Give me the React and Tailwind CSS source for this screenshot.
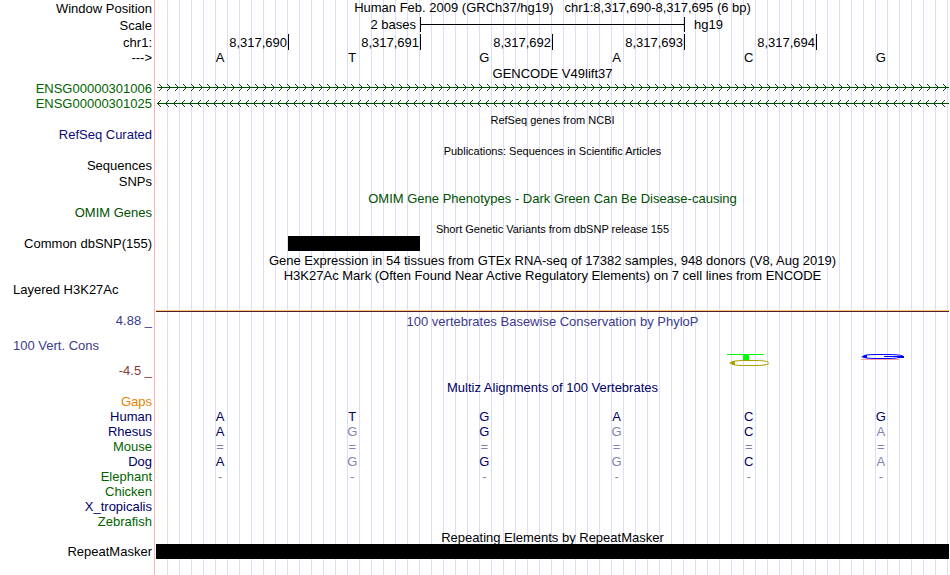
import React from "react";

const BASES = ["A", "T", "G", "A", "C", "G"];
const POSITIONS = ["8,317,690", "8,317,691", "8,317,692", "8,317,693", "8,317,694"];

// lower case = mismatch with the human base, drawn faded
const ALIGNMENTS = [
    { name: "Human", color: "text-[#000064]", bases: "ATGACG" },
    { name: "Rhesus", color: "text-[#000064]", bases: "AgGgCa" },
    { name: "Mouse", color: "text-[#006400]", bases: "======" },
    { name: "Dog", color: "text-[#000064]", bases: "AgGgCa" },
    { name: "Elephant", color: "text-[#006400]", bases: "------" },
    { name: "Chicken", color: "text-[#006400]", bases: "" },
    { name: "X_tropicalis", color: "text-[#000064]", bases: "" },
    { name: "Zebrafish", color: "text-[#006400]", bases: "" },
];

const Row = ({ label, labelClass = "", height = "h-[15px]", children }) => (
    <div className={`flex ${height}`}>
        <div
            className={`flex w-[155px] shrink-0 items-center justify-end border-r border-[#ffb4b4] pr-0.5 ${labelClass}`}>
            {label}
        </div>
        <div className="ml-px min-w-0 flex-1 bg-[repeating-linear-gradient(to_right,transparent_0px,transparent_11px,#dcdcff_11px,#dcdcff_12px)]">
            {children}
        </div>
    </div>
);

const Title = ({ className = "pt-0.5", children }) => (
    <h2 className={`flex h-full items-center justify-center ${className}`}>{children}</h2>
);

const BaseRow = ({ bases, className = "", faded = "" }) => (
    <div className={`grid h-full grid-cols-6 ${className}`}>
        {[...bases].map((base, i) => (
            <span
                key={i}
                className={`flex items-center justify-center pr-1 ${
                    /[a-z=-]/.test(base) ? faded : ""
                }`}>
                {base.toUpperCase()}
            </span>
        ))}
    </div>
);

const Intron = ({ id, direction }) => (
    <svg className="block h-[15px] w-full" shapeRendering="crispEdges">
        <defs>
            <pattern id={id} width="8" height="15" patternUnits="userSpaceOnUse">
                <path
                    d={
                        direction === "right"
                            ? "M3 4h1v1h-1zM4 5h1v1h-1zM5 6h1v1h-1zM6 7h1v1h-1zM5 8h1v1h-1zM4 9h1v1h-1zM3 10h1v1h-1z"
                            : "M4 4h1v1h-1zM3 5h1v1h-1zM2 6h1v1h-1zM1 7h1v1h-1zM2 8h1v1h-1zM3 9h1v1h-1zM4 10h1v1h-1z"
                    }
                    fill="#005000"
                />
            </pattern>
        </defs>
        <rect width="100%" height="15" fill={`url(#${id})`} />
        <rect x="1" y="7" width="100%" height="1" fill="#005000" />
    </svg>
);

const App = () => {
    return (
        <main className="bg-white pr-px font-['Liberation_Sans',Arial,sans-serif] text-[13px] leading-[15px] text-black">
            <Row label="Window Position" height="h-4">
                <Title className="pb-0.5 whitespace-pre">
                    {"Human Feb. 2009 (GRCh37/hg19)   chr1:8,317,690-8,317,695 (6 bp)"}
                </Title>
            </Row>
            <Row label="Scale" labelClass="pt-0.5" height="h-[17px]">
                <div className="grid h-full grid-cols-6 py-px pl-px">
                    <span className="col-span-2 border-r border-black pr-1 text-right">2 bases</span>
                    <span className="col-span-2 flex items-center border-r border-black">
                        <span className="h-px w-full bg-black" />
                    </span>
                    <span className="pl-[9px]">hg19</span>
                </div>
            </Row>
            <Row label="chr1:" labelClass="pt-0.5" height="h-[17px]">
                <div className="grid h-full grid-cols-6 pt-px pb-px pl-px">
                    {POSITIONS.map((pos) => (
                        <span key={pos} className="border-r border-black pr-px pt-px text-right">
                            {pos}
                        </span>
                    ))}
                </div>
            </Row>
            <Row label="--->">
                <BaseRow bases={BASES} className="pb-0.5" />
            </Row>

            <Row>
                <Title>GENCODE V49lift37</Title>
            </Row>
            <Row label="ENSG00000301006" labelClass="text-[#006400]" height="h-4">
                <Intron id="forward" direction="right" />
            </Row>
            <Row label="ENSG00000301025" labelClass="text-[#006400]">
                <Intron id="reverse" direction="left" />
            </Row>

            <Row height="h-4">
                <Title className="pt-0.5 text-[11px]">RefSeq genes from NCBI</Title>
            </Row>
            <Row label="RefSeq Curated" labelClass="text-[#0c0c78]" />
            <Row height="h-4">
                <Title className="pt-0.5 text-[11px]">Publications: Sequences in Scientific Articles</Title>
            </Row>
            <Row label="Sequences" />
            <Row label="SNPs" height="h-4" />
            <Row height="h-4">
                <Title className="pt-0.5 text-[#005000]">
                    OMIM Gene Phenotypes - Dark Green Can Be Disease-causing
                </Title>
            </Row>
            <Row label="OMIM Genes" labelClass="text-[#005000]" />
            <Row height="h-4">
                <Title className="pt-0.5 text-[11px]">Short Genetic Variants from dbSNP release 155</Title>
            </Row>
            <Row label="Common dbSNP(155)">
                <div className="grid h-full grid-cols-6">
                    <span className="col-start-2 bg-black" />
                </div>
            </Row>

            <Row height="h-[17px]">
                <Title>Gene Expression in 54 tissues from GTEx RNA-seq of 17382 samples, 948 donors (V8, Aug 2019)</Title>
            </Row>
            <Row height="h-[14px]">
                <Title className="">
                    H3K27Ac Mark (Often Found Near Active Regulatory Elements) on 7 cell lines from ENCODE
                </Title>
            </Row>
            <Row
                label={<span className="w-full self-start pl-[13px]">Layered H3K27Ac</span>}
                height="h-[30px]">
                <div className="flex h-full flex-col justify-end">
                    <span className="h-px bg-[#ffc864]" />
                    <span className="h-px bg-[#501e32]" />
                </div>
            </Row>

            <Row label="4.88 _" labelClass="text-[#3c3c8c]" height="h-[17px]">
                <Title className="pt-0.5 text-[#3c3c8c]">100 vertebrates Basewise Conservation by PhyloP</Title>
            </Row>
            <Row
                height="h-[50px]"
                label={
                    <div className="flex h-full w-full flex-col justify-between pt-[9px] pb-px">
                        <span className="pl-[13px] text-[#3c3c8c]">100 Vert. Cons</span>
                        <span className="text-right text-[#8c3c3c]">-4.5 _</span>
                    </div>
                }>
                <div className="grid h-full grid-cols-6 pl-px">
                    <svg className="col-start-5 h-[50px] w-[132px]" viewBox="0 0 132 50">
                        <rect x="42" y="25" width="37" height="1" fill="#00ff00" />
                        <rect x="58" y="25" width="6" height="6" fill="#00ff00" />
                        <path
                            d="M83.500 33Q80 31.500 70 31.500H60Q46 31.500 46 34Q46 36.500 60 36.500H70Q81 36.500 84 34.500"
                            fill="none"
                            stroke="#a8a000"
                        />
                        <path d="M44 34l4-2h2v4h-2z" fill="#a8a000" />
                    </svg>
                    <svg className="col-start-6 h-[50px] w-[132px]" viewBox="0 0 132 50">
                        <rect x="44" y="30" width="38" height="1" fill="#ffa0a0" />
                        <path
                            d="M86 27Q82 25.500 70 25.500H60Q46 25.500 46 27.500Q46 29.500 60 29.500H70Q82 29.500 84 27.500H67"
                            fill="none"
                            stroke="#0000ff"
                        />
                        <path d="M44 28l4-2h2v3h-2z" fill="#0000ff" />
                        <rect x="82" y="27" width="5" height="2" fill="#0000ff" />
                    </svg>
                </div>
            </Row>

            <Row>
                <Title className="pt-0.5 text-[#000064]">Multiz Alignments of 100 Vertebrates</Title>
            </Row>
            <Row label="Gaps" labelClass="text-[#e68200]" />
            {ALIGNMENTS.map(({ name, color, bases }) => (
                <Row key={name} label={name} labelClass={color}>
                    <BaseRow bases={bases} className="text-[#000064]" faded="text-[#8282b4]" />
                </Row>
            ))}

            <Row>
                <Title>Repeating Elements by RepeatMasker</Title>
            </Row>
            <Row label="RepeatMasker">
                <div className="h-full bg-black" />
            </Row>
            <Row height="h-4" />
        </main>
    );
};

export default App;
